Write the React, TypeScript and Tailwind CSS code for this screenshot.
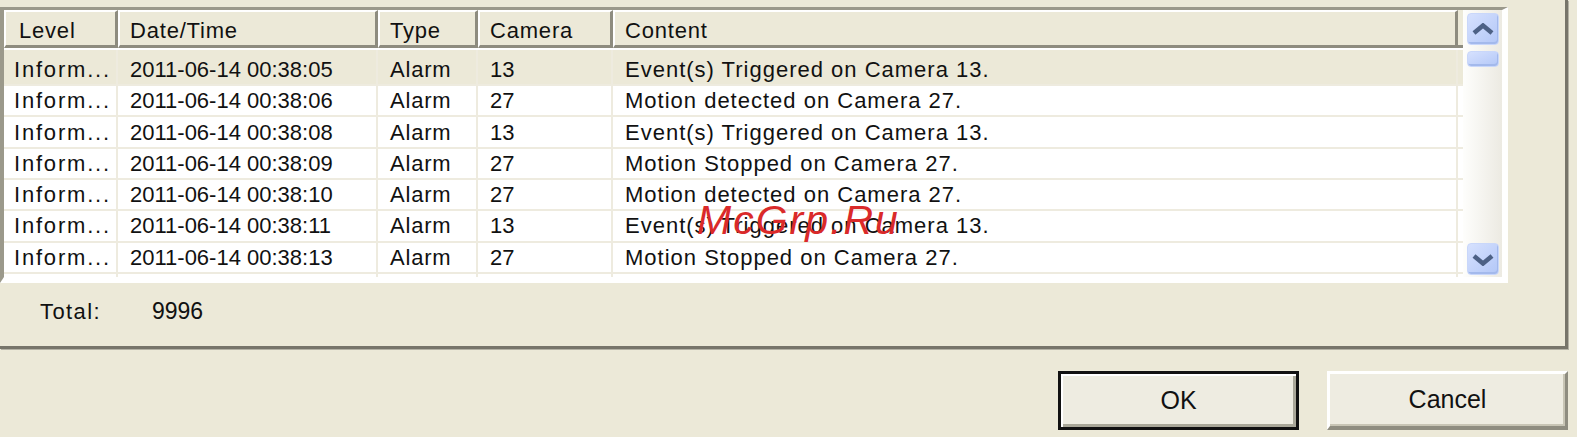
import { clsx } from "clsx";

const rows = [
  ["2011-06-14 00:38:05", "13", "Event(s) Triggered on Camera 13."],
  ["2011-06-14 00:38:06", "27", "Motion detected on Camera 27."],
  ["2011-06-14 00:38:08", "13", "Event(s) Triggered on Camera 13."],
  ["2011-06-14 00:38:09", "27", "Motion Stopped on Camera 27."],
  ["2011-06-14 00:38:10", "27", "Motion detected on Camera 27."],
  ["2011-06-14 00:38:11", "13", "Event(s) Triggered on Camera 13."],
  ["2011-06-14 00:38:13", "27", "Motion Stopped on Camera 27."],
  ["", "", ""],
];

const widths = ["w-[114px]", "w-[260px]", "w-[100px]", "w-[135px]", "w-[845px]"];
const headers = ["Level", "Date/Time", "Type", "Camera", "Content"];

function Chevron({ down }: { down?: boolean }) {
  return (
    <svg width="22" height="13" viewBox="0 0 22 13">
      <path
        d={down ? "M2 3 L11 10.5 L20 3" : "M2 10 L11 2.5 L20 10"}
        fill="none"
        stroke="#4D6185"
        strokeWidth="4.5"
      />
    </svg>
  );
}

function ScrollButton({ down }: { down?: boolean }) {
  return (
    <div className="ml-[4px] flex h-[32px] w-[32px] items-center justify-center rounded-[4px] border border-[#C9D7FA] bg-gradient-to-br from-[#D6E1FE] to-[#B3C7F7] shadow-[inset_-1px_-2px_0_#A3B9EC]">
      <Chevron down={down} />
    </div>
  );
}

function HeaderCell({ label, width }: { label: string; width: string }) {
  return (
    <div
      className={clsx(
        width,
        "flex h-full items-center border-t-2 border-l-2 border-r-[3px] border-b-[3px] border-t-white border-l-white border-r-[#8E8C7F] border-b-[#8E8C7F] pt-[3px] pl-[10px] tracking-[0.8px]",
        label === "Level" && "pl-[13px]",
      )}
    >
      {label}
    </div>
  );
}

function Row({ row, first }: { row: string[]; first?: boolean }) {
  const [date, cam, text] = row;
  const cells = [date ? "Inform..." : "", date, date ? "Alarm" : "", cam, text];
  return (
    <div
      className={clsx(
        "flex shrink-0 border-b-2 border-[#EEEBDF]",
        first ? "h-[36px] bg-[#ECE9D8]" : "h-[31.33px] bg-white",
      )}
    >
      {cells.map((c, i) => (
        <div
          key={i}
          className={clsx(
            widths[i],
            "flex h-full items-center border-r-2 border-[#EEEBDF] whitespace-nowrap",
            i === 0 ? "pl-[10px] tracking-[1.8px]" : "pl-[12px]",
            i === 2 && "tracking-[0.8px]",
            i === 4 && "tracking-[1px]",
            first && "pt-[4px]",
          )}
        >
          {c}
        </div>
      ))}
    </div>
  );
}

export default function App() {
  return (
    <div className="relative h-[437px] w-[1577px] overflow-hidden bg-[#ECE9D8] font-['Liberation_Sans',Arial,sans-serif] text-[22px] text-[#111]">
      <div className="h-[349px] w-[1568px] border-r-[3px] border-b-[3px] border-[#77756A] pt-[7px] shadow-[1px_1px_0_#B4B2A5]">
        <div className="flex h-[276px] w-[1508px] border-t-[3px] border-l-4 border-r-[6px] border-b-[6px] border-t-[#9B998B] border-l-[#9B998B] border-r-white border-b-white">
          <div className="flex w-[1459px] flex-col bg-white">
            <div className="flex h-[38px] shrink-0 bg-[#ECE9D8]">
              {headers.map((h, i) => (
                <HeaderCell key={h} label={h} width={widths[i]} />
              ))}
              <div className="h-full flex-1 border-b-[3px] border-[#8E8C7F]" />
            </div>
            <div className="flex flex-1 flex-col overflow-hidden pt-[2px]">
              {rows.map((r, i) => (
                <Row key={i} row={r} first={i === 0} />
              ))}
            </div>
          </div>
          <div className="flex w-[39px] flex-col bg-gradient-to-r from-[#FEFEFC] to-[#ECEAE2] pt-[3px] pb-[2px]">
            <ScrollButton />
            <div className="mt-[6px] ml-[4px] h-[16px] w-[32px] rounded-[4px] border border-[#C9D7FA] bg-gradient-to-br from-[#D6E1FE] to-[#B3C7F7] shadow-[inset_-1px_-2px_0_#A3B9EC]" />
            <div className="flex-1" />
            <ScrollButton down />
          </div>
        </div>
        <div className="flex h-[58px] items-center pb-[2px] pl-[40px]">
          <span className="w-[112px] tracking-[1.4px]">Total:</span>
          <span className="text-[23px]">9996</span>
        </div>
      </div>
      <div className="flex justify-end gap-[28px] pt-[22px] pr-[9px] text-[25px]">
        <button className="flex h-[59px] w-[241px] items-center justify-center border-[3px] border-[#111] bg-[#EEECE1] shadow-[inset_2px_2px_0_#FFFFFF,inset_-3px_-3px_0_#A9A798]">
          OK
        </button>
        <button className="flex h-[59px] w-[241px] items-center justify-center border-t-[3px] border-l-[3px] border-r-[3px] border-b-[4px] border-t-white border-l-white border-r-[#8F8D80] border-b-[#8F8D80] bg-[#EEECE1] shadow-[inset_-2px_-2px_0_#C8C5B5]">
          Cancel
        </button>
      </div>
      <div className="absolute top-[200px] left-[697px] text-[41px] leading-none italic tracking-[2px] text-[#DA2A2A]">
        McGrp.Ru
      </div>
    </div>
  );
}
